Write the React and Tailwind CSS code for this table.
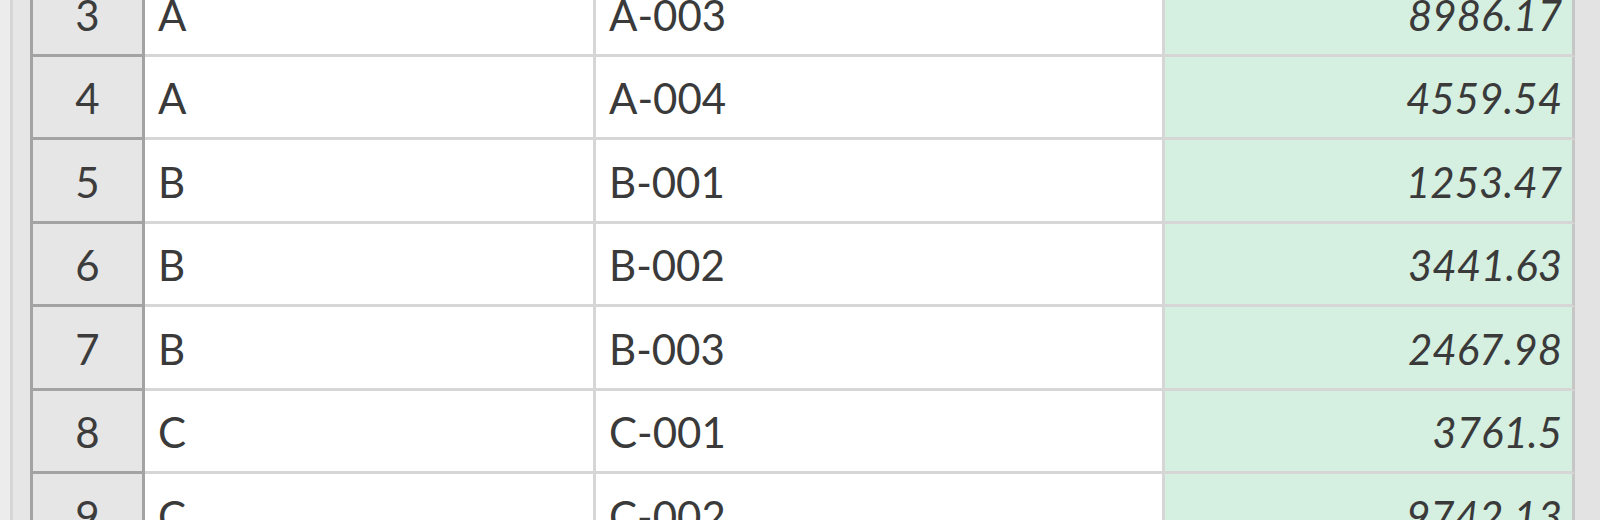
import React from 'react';

const rows = [
  { n: 3, group: 'A', code: 'A-003', value: '8986.17' },
  { n: 4, group: 'A', code: 'A-004', value: '4559.54' },
  { n: 5, group: 'B', code: 'B-001', value: '1253.47' },
  { n: 6, group: 'B', code: 'B-002', value: '3441.63' },
  { n: 7, group: 'B', code: 'B-003', value: '2467.98' },
  { n: 8, group: 'C', code: 'C-001', value: '3761.5' },
  { n: 9, group: 'C', code: 'C-002', value: '9742.13' },
];

const Row = ({ row, tall }) => (
  <div className={`flex shrink-0 ${tall ? 'h-[84px]' : 'h-[83px]'}`}>
    <div className="w-[115px] flex items-end justify-center pb-[18px] bg-[#e6e6e6] border-l-[3px] border-r-[3px] border-b-[3px] border-[#a3a3a3] text-[#3c3c3c]">
      {row.n}
    </div>
    <div className="w-[451px] flex items-end pl-[13px] pb-[18px] border-r-[3px] border-b-[3px] border-[#d6d6d6]">
      {row.group}
    </div>
    <div className="w-[569px] flex items-end pl-[13px] pb-[18px] border-r-[3px] border-b-[3px] border-[#d6d6d6]">
      {row.code}
    </div>
    <div className="w-[410px] flex items-end justify-end pr-[10px] pb-[18px] bg-[#d5efe0] border-r-[3px] border-b-[3px] border-r-[#c6c6c6] border-b-[#d6d6d6] italic">
      {row.value}
    </div>
  </div>
);

export default function App() {
  return (
    <div className="w-[1600px] h-[520px] overflow-hidden bg-white flex text-[42px] leading-none text-[#3a3a3a] font-['Lato',sans-serif]">
      <div className="w-[30px] flex bg-[#e6e6e6]">
        <div className="w-[10px] bg-[#ececec]" />
        <div className="w-[3px] bg-[#d6d6d6]" />
      </div>
      <div className="flex flex-col mt-[-27px]">
        {rows.map((row, i) => (
          <Row key={row.n} row={row} tall={i % 2 === 0} />
        ))}
      </div>
      <div className="flex-1 bg-[#e3e3e3]" />
    </div>
  );
}
